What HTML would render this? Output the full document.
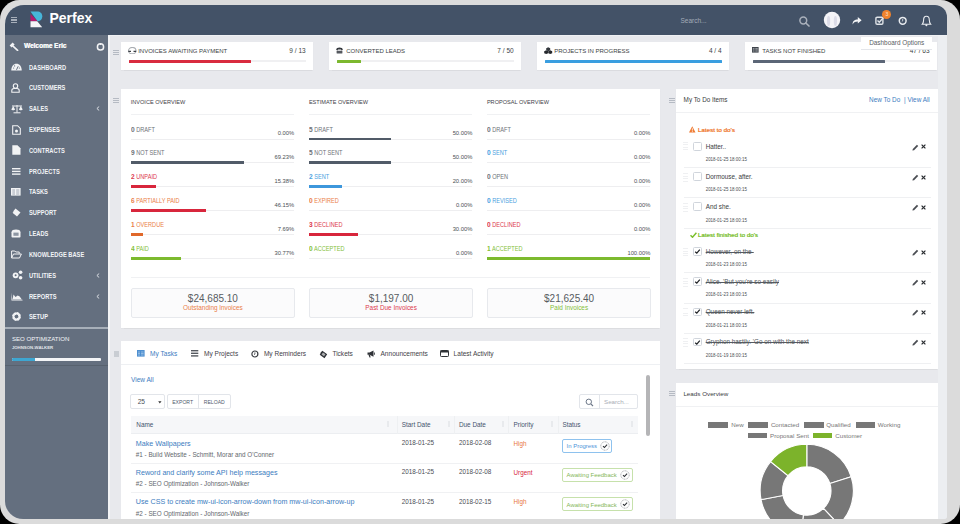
<!DOCTYPE html>
<html><head><meta charset="utf-8">
<style>
*{box-sizing:border-box;margin:0;padding:0}
html,body{width:960px;height:524px;overflow:hidden;background:#000;font-family:"Liberation Sans",sans-serif}
#frame{position:absolute;left:0;top:0;width:960px;height:524px;background:#dbdbdb;border-radius:19.5px;overflow:hidden}
#screen{position:absolute;left:5px;top:5px;width:942px;height:513.5px;background:#e8e9ed;border-radius:19px 12px 3px 18px;overflow:hidden}
#pg{position:absolute;left:-5px;top:-5px;width:960px;height:524px}
.a{position:absolute;white-space:nowrap}
#header{position:absolute;left:0;top:0;width:960px;height:35px;background:#435267}
#sidebar{position:absolute;left:0;top:35px;width:108px;height:489px;background:#646f7f}
.card{position:absolute;background:#fff}
.mi{position:absolute;left:28.8px;font-size:6.8px;font-weight:700;color:#f1f3f6;line-height:8px;height:8px;transform:scaleX(0.84);transform-origin:0 50%;margin-top:0.9px}
.ic{position:absolute}
.handle{position:absolute;width:6px;height:5px;border-top:1px solid #b5bac3;border-bottom:1px solid #b5bac3}
.handle:after{content:"";position:absolute;left:0;top:1px;width:6px;height:1px;background:#b5bac3}
.ovl{font-size:6.3px;line-height:7px;transform:scaleX(0.89);transform-origin:0 50%;margin-top:-0.3px}
.ovl .dg{font-size:7.4px;font-weight:700}
.ovp{font-size:5.8px;color:#4b4f55;line-height:7px}
.sbox{background:#fbfbfc;border:1px solid #e7e9ed;border-radius:2px}
.samt{font-size:10px;color:#575b61;line-height:12px;text-align:center}
.slab{font-size:6.4px;line-height:8px;text-align:center}
.st{font-size:6px;color:#3c3f44;line-height:8px}

</style></head>
<body>
<div id="frame">
<div id="screen">
<div id="pg">
  <div id="header">
    <!-- hamburger -->
    <div class="a" style="left:11px;top:17px;width:6px;height:1.2px;background:#a7afba"></div>
    <div class="a" style="left:11px;top:19.4px;width:6px;height:1.2px;background:#a7afba"></div>
    <div class="a" style="left:11px;top:21.8px;width:6px;height:1.2px;background:#a7afba"></div>
    <!-- logo -->
    <svg class="a" style="left:30px;top:11px" width="13" height="17" viewBox="0 0 13 17">
      <path d="M0.5 0.5 H7 C10.5 0.5 12.3 2.6 12.3 5.3 C12.3 8 10.6 10 8 10.3 L7.5 10.3 Z" fill="#47b5d9"/>
      <path d="M0.5 3 L7.5 10.3 L0.5 10.3 Z" fill="#b3196e"/>
      <path d="M0.5 10.3 H7.2 L12.2 16.2 H0.5 Z" fill="#f4f4f8"/>
    </svg>
    <div class="a" style="left:49.5px;top:10px;font-size:14px;font-weight:700;color:#fff;line-height:17px">Perfex</div>
    <div class="a" style="left:680.5px;top:16.5px;font-size:6.5px;color:#a3acb9;line-height:8px">Search...</div>
    <!-- search icon -->
    <svg class="a" style="left:798px;top:15px" width="13" height="13" viewBox="0 0 13 13">
      <circle cx="5.3" cy="5.5" r="3.4" fill="none" stroke="#aab1bc" stroke-width="1.5"/>
      <path d="M7.8 8 L11 11" stroke="#aab1bc" stroke-width="1.7" stroke-linecap="round"/>
    </svg>
    <!-- avatar -->
    <svg class="a" style="left:823px;top:11px" width="18" height="18" viewBox="0 0 18 18"><circle cx="9" cy="9" r="8.2" fill="#f4f4f8"/><ellipse cx="5.6" cy="10" rx="1.6" ry="5" fill="#dcdce8"/><ellipse cx="12.4" cy="10" rx="1.6" ry="5" fill="#dcdce8"/></svg>
    <!-- share -->
    <svg class="a" style="left:852px;top:16px" width="10" height="9" viewBox="0 0 10 9">
      <path d="M0.6 8.5 C0.6 5 2.5 3.6 5.8 3.6 V1 L9.6 4.3 L5.8 7.6 V5.4 C3.5 5.4 1.8 6 0.6 8.5 Z" fill="#f4f5f7"/>
    </svg>
    <!-- checkbox icon -->
    <svg class="a" style="left:875px;top:16px" width="10" height="10" viewBox="0 0 10 10">
      <rect x="0.9" y="1.2" width="7" height="7" rx="1.2" fill="none" stroke="#dfe3e8" stroke-width="1.4"/>
      <path d="M2.5 4.5 L4.3 6.3 L8.5 1.5" fill="none" stroke="#dfe3e8" stroke-width="1.4"/>
    </svg>
    <div class="a" style="left:882.2px;top:10.1px;width:9.2px;height:9.2px;border-radius:50%;background:#f0832c;color:#fde6d2;font-size:5px;line-height:9.2px;text-align:center">3</div>
    <!-- clock -->
    <svg class="a" style="left:897px;top:15px" width="12" height="12" viewBox="0 0 12 12">
      <circle cx="5.7" cy="5.8" r="3.4" fill="none" stroke="#e9ecf0" stroke-width="1.5"/>
      <path d="M5.7 4 V5.9 L4.8 6.7" fill="none" stroke="#e9ecf0" stroke-width="0.8"/>
    </svg>
    <!-- bell -->
    <svg class="a" style="left:921px;top:15px" width="11" height="12" viewBox="0 0 11 12">
      <path d="M5.4 1.2 C3.2 1.2 2.6 3 2.6 5 C2.6 7 2.2 8.2 1.2 9.3 H9.7 C8.7 8.2 8.3 7 8.3 5 C8.3 3 7.6 1.2 5.4 1.2 Z" fill="none" stroke="#e9ecf0" stroke-width="1.1"/>
      <circle cx="5.4" cy="10.3" r="1" fill="#e9ecf0"/>
    </svg>
  </div>
  <div id="sidebar">
    <!-- welcome -->
    <svg class="ic" style="left:9.3px;top:7.3px" width="10" height="9" viewBox="0 0 10 9"><path d="M0.6 3.6 L3.6 0.6 L5.6 2.6 L2.6 5.6 Z" fill="#f2f3f5"/><path d="M4 4.2 L8.6 8.3" stroke="#f2f3f5" stroke-width="1.7" stroke-linecap="round"/></svg>
    <div class="a" style="left:23.9px;top:7px;font-size:6.5px;font-weight:700;color:#f6f7f9;line-height:8px;text-shadow:0.25px 0 0 #f6f7f9">Welcome Eric</div>
    <svg class="ic" style="left:95.5px;top:6.8px" width="9" height="9" viewBox="0 0 9 9"><circle cx="4.5" cy="4.9" r="3.1" fill="none" stroke="#f2f3f5" stroke-width="1.5"/><path d="M4.5 0.9 V3" stroke="#f2f3f5" stroke-width="1.2"/></svg>
<div class="mi" style="top:27.7px">DASHBOARD</div>
<svg class="ic" style="left:11px;top:28.0px" width="11" height="8" viewBox="0 0 11 8"><path d="M0.3 7.5 C0.3 3.5 2.6 0.8 5.5 0.8 C8.4 0.8 10.7 3.5 10.7 7.5 Z" fill="#f2f3f5"/><path d="M5.5 6.8 L7.2 3.3" stroke="#646f7f" stroke-width="1"/><circle cx="2.6" cy="5" r="0.6" fill="#646f7f"/><circle cx="3.6" cy="2.9" r="0.6" fill="#646f7f"/><circle cx="8.4" cy="5" r="0.6" fill="#646f7f"/></svg>
<div class="mi" style="top:48.5px">CUSTOMERS</div>
<svg class="ic" style="left:11px;top:47.8px" width="9" height="10" viewBox="0 0 9 10"><circle cx="4.5" cy="3" r="2.2" fill="none" stroke="#f2f3f5" stroke-width="1.1"/><path d="M0.8 9.3 V7.6 C0.8 6.3 2 5.5 3 5.5 H6 C7 5.5 8.2 6.3 8.2 7.6 V9.3 Z" fill="none" stroke="#f2f3f5" stroke-width="1.1"/></svg>
<div class="mi" style="top:69.3px">SALES</div>
<svg class="ic" style="left:11px;top:68.6px" width="12" height="10" viewBox="0 0 12 10"><path d="M6 1 V8.5 M2.5 8.8 H9.5 M1 2 H11" stroke="#f2f3f5" stroke-width="1"/><path d="M0.3 5.5 L2.2 2 L4.1 5.5 C3.5 6.6 0.9 6.6 0.3 5.5 Z M7.9 5.5 L9.8 2 L11.7 5.5 C11.1 6.6 8.5 6.6 7.9 5.5 Z" fill="#f2f3f5"/></svg>
<svg class="ic" style="left:95.5px;top:71.1px" width="4" height="5" viewBox="0 0 4 5"><path d="M3.2 0.5 L0.9 2.5 L3.2 4.5" fill="none" stroke="#e6e9ed" stroke-width="0.9"/></svg>
<div class="mi" style="top:90.2px">EXPENSES</div>
<svg class="ic" style="left:11.5px;top:89.5px" width="9" height="10" viewBox="0 0 9 10"><path d="M0.7 0.7 H5.6 L8.3 3.4 V9.3 H0.7 Z" fill="none" stroke="#f2f3f5" stroke-width="1.1"/><circle cx="4.5" cy="6" r="1.5" fill="#f2f3f5"/></svg>
<div class="mi" style="top:111.0px">CONTRACTS</div>
<svg class="ic" style="left:11.5px;top:110.3px" width="9" height="10" viewBox="0 0 9 10"><path d="M0.3 0.3 H5.5 L8.5 3.3 V9.7 H0.3 Z" fill="#f2f3f5"/></svg>
<div class="mi" style="top:131.8px">PROJECTS</div>
<svg class="ic" style="left:11.5px;top:132.6px" width="9" height="7" viewBox="0 0 9 7"><rect x="0" y="0" width="8.5" height="1.4" fill="#f2f3f5"/><rect x="0" y="2.7" width="8.5" height="1.4" fill="#f2f3f5"/><rect x="0" y="5.4" width="8.5" height="1.4" fill="#f2f3f5"/></svg>
<div class="mi" style="top:152.6px">TASKS</div>
<svg class="ic" style="left:11.3px;top:152.9px" width="10" height="8" viewBox="0 0 10 8"><rect x="0" y="0" width="9.6" height="7.6" fill="#f2f3f5"/><path d="M1.3 2 H4 M5.2 2 H8.3 M1.3 4 H4 M5.2 4 H8.3 M1.3 6 H4 M5.2 6 H8.3" stroke="#8d96a3" stroke-width="0.8"/></svg>
<div class="mi" style="top:173.4px">SUPPORT</div>
<svg class="ic" style="left:11.5px;top:173.2px" width="9" height="9" viewBox="0 0 9 9"><path d="M3.5 0.5 L8.5 4.5 L5 8.5 L0.5 4.8 C1.3 4.4 1.6 3.8 1.3 3.2 Z" fill="#f2f3f5"/></svg>
<div class="mi" style="top:194.3px">LEADS</div>
<svg class="ic" style="left:11.3px;top:194.1px" width="10" height="9" viewBox="0 0 10 9"><path d="M0.5 3.3 C0.5 1.3 2.5 0.6 5 0.6 C7.5 0.6 9.5 1.3 9.5 3.3 V7.8 C9.5 8.3 9.2 8.5 8.7 8.5 H1.3 C0.8 8.5 0.5 8.3 0.5 7.8 Z" fill="#f2f3f5"/><rect x="2.4" y="3.6" width="5.2" height="3.2" fill="#8d96a3"/></svg>
<div class="mi" style="top:215.1px">KNOWLEDGE BASE</div>
<svg class="ic" style="left:11.3px;top:214.9px" width="11" height="9" viewBox="0 0 11 9"><path d="M0.6 8 V1 H3.8 L4.8 2 H8.2 V3.7 M0.6 8 L2.5 4 H10.4 L8.5 8 Z" fill="none" stroke="#f2f3f5" stroke-width="1"/></svg>
<div class="mi" style="top:235.9px">UTILITIES</div>
<svg class="ic" style="left:11.5px;top:235.2px" width="11" height="10" viewBox="0 0 11 10"><circle cx="3.6" cy="5.3" r="2.9" fill="#f2f3f5"/><circle cx="3.6" cy="5.3" r="1" fill="#646f7f"/><circle cx="8.6" cy="2.2" r="1.8" fill="#f2f3f5"/><circle cx="8.6" cy="7.8" r="1.8" fill="#f2f3f5"/></svg>
<svg class="ic" style="left:95.5px;top:237.7px" width="4" height="5" viewBox="0 0 4 5"><path d="M3.2 0.5 L0.9 2.5 L3.2 4.5" fill="none" stroke="#e6e9ed" stroke-width="0.9"/></svg>
<div class="mi" style="top:256.7px">REPORTS</div>
<svg class="ic" style="left:11px;top:256.5px" width="12" height="9" viewBox="0 0 12 9"><path d="M0.5 0.5 V8.5 H11.5 V7.7 H1.3 Z" fill="#f2f3f5"/><path d="M1.5 7.5 L2.5 2.5 L4.5 5 L6.7 3.5 L8.7 4.5 L10.8 7.5 Z" fill="#f2f3f5"/></svg>
<svg class="ic" style="left:95.5px;top:258.5px" width="4" height="5" viewBox="0 0 4 5"><path d="M3.2 0.5 L0.9 2.5 L3.2 4.5" fill="none" stroke="#e6e9ed" stroke-width="0.9"/></svg>
<div class="mi" style="top:277.5px">SETUP</div>
<svg class="ic" style="left:11.5px;top:277.3px" width="9" height="9" viewBox="0 0 9 9"><circle cx="4.5" cy="4.5" r="3.1" fill="none" stroke="#f2f3f5" stroke-width="2.6" stroke-dasharray="1.6 0.8"/><circle cx="4.5" cy="4.5" r="3.1" fill="none" stroke="#f2f3f5" stroke-width="1.6"/></svg>
    <div class="a" style="left:5px;top:292px;width:103px;height:1.5px;background:#a7afb9"></div>
    <div class="a" style="left:11.9px;top:299.5px;font-size:6.1px;color:#f4f5f7;line-height:8px">SEO OPTIMIZATION</div>
    <div class="a" style="left:11.9px;top:309.8px;font-size:4.3px;font-weight:700;color:#e2e6ea;line-height:5px">JOHNSON-WALKER</div>
    <div class="a" style="left:11.5px;top:322.7px;width:89px;height:3px;background:#f4f5f7;border-radius:1px"></div>
    <div class="a" style="left:11.5px;top:322.7px;width:23.5px;height:3px;background:#3ea6d1;border-radius:1px 0 0 1px"></div>
    <div class="a" style="left:5px;top:329.8px;width:103px;height:1px;background:#58626f"></div>
  </div>
<!--CARDS-->
<div class="card" style="left:121px;top:41.5px;width:192px;height:28.5px;box-shadow:0 0.5px 1px rgba(0,0,0,0.06)"></div>
<div class="handle" style="left:113px;top:50px"></div>
<svg class="a" style="left:128px;top:46.6px" width="9" height="7.5" viewBox="0 0 9 7.5"><ellipse cx="4.25" cy="3.7" rx="3.7" ry="3.2" fill="none" stroke="#a9adb2" stroke-width="1.1"/><path d="M0.3 4.3 H3 M5.5 4.3 H8.2" stroke="#3a3e44" stroke-width="1.3"/></svg>
<div class="a st" style="left:138.2px;top:46.5px">INVOICES AWAITING PAYMENT</div>
<div class="a st" style="right:654.4px;top:46.5px;font-size:6.5px">9 / 13</div>
<div class="a" style="left:128.5px;top:60.4px;width:177.2px;height:1.6px;background:#f0f0f2"></div>
<div class="a" style="left:128.5px;top:59.8px;width:122.6px;height:2.8px;background:#d92b3f;border-radius:0.5px"></div>
<div class="card" style="left:329px;top:41.5px;width:192px;height:28.5px;box-shadow:0 0.5px 1px rgba(0,0,0,0.06)"></div>
<svg class="a" style="left:336.3px;top:46.7px" width="7" height="7" viewBox="0 0 7 7"><path d="M0.2 3 C0.2 1 1.8 0.4 3.5 0.4 C5.2 0.4 6.8 1 6.8 3 L5.5 3.4 L5 2.4 H2 L1.5 3.4 Z" fill="#33373d"/><rect x="0.6" y="3.8" width="5.8" height="2.8" rx="0.6" fill="#55595f"/></svg>
<div class="a st" style="left:346.2px;top:46.5px">CONVERTED LEADS</div>
<div class="a st" style="right:446.4px;top:46.5px;font-size:6.5px">7 / 50</div>
<div class="a" style="left:336.5px;top:60.4px;width:177.2px;height:1.6px;background:#f0f0f2"></div>
<div class="a" style="left:336.5px;top:59.8px;width:24.8px;height:2.8px;background:#7cb82f;border-radius:0.5px"></div>
<div class="card" style="left:537px;top:41.5px;width:192px;height:28.5px;box-shadow:0 0.5px 1px rgba(0,0,0,0.06)"></div>
<svg class="a" style="left:544.3px;top:46.5px" width="8.5" height="7" viewBox="0 0 8.5 7"><path d="M4.2 0.3 L6.2 1.3 V3.3 L4.2 4.3 L2.2 3.3 V1.3 Z" fill="#33373d"/><path d="M2.2 3.3 L4.2 4.3 V6.3 L2.2 7 L0.2 6.3 V4.3 Z M6.2 3.3 L8.2 4.3 V6.3 L6.2 7 L4.4 6.3 V4.3 Z" fill="#26292e"/></svg>
<div class="a st" style="left:554.2px;top:46.5px">PROJECTS IN PROGRESS</div>
<div class="a st" style="right:238.4px;top:46.5px;font-size:6.5px">4 / 4</div>
<div class="a" style="left:544.5px;top:60.4px;width:177.2px;height:1.6px;background:#f0f0f2"></div>
<div class="a" style="left:544.5px;top:59.8px;width:177.2px;height:2.8px;background:#3a9ee0;border-radius:0.5px"></div>
<div class="card" style="left:745px;top:41.5px;width:192px;height:28.5px;box-shadow:0 0.5px 1px rgba(0,0,0,0.06)"></div>
<svg class="a" style="left:752.3px;top:47px" width="7" height="6" viewBox="0 0 7 6"><rect x="0" y="0" width="6.6" height="5.6" fill="#3f444b"/><path d="M0.8 1.5 H2.5 M3.3 1.5 H5.8 M0.8 2.8 H2.5 M3.3 2.8 H5.8 M0.8 4.1 H2.5 M3.3 4.1 H5.8" stroke="#c7cbd0" stroke-width="0.6"/></svg>
<div class="a st" style="left:762.2px;top:46.5px">TASKS NOT FINISHED</div>
<div class="a st" style="right:30.4px;top:46.5px;font-size:6.5px">47 / 63</div>
<div class="a" style="left:752.5px;top:60.4px;width:177.2px;height:1.6px;background:#f0f0f2"></div>
<div class="a" style="left:752.5px;top:59.8px;width:132.2px;height:2.8px;background:#5b6677;border-radius:0.5px"></div>
<!--/CARDS-->
<!--OVERVIEW-->
<div class="card" style="left:120.5px;top:88.8px;width:539.5px;height:239.2px;box-shadow:0 0.5px 1px rgba(0,0,0,0.05)"></div>
<div class="handle" style="left:113.3px;top:97.5px"></div>
<div class="a" style="left:130.7px;top:98px;font-size:5.6px;color:#3f4247;line-height:8px">INVOICE OVERVIEW</div>
<div class="a" style="left:130.7px;top:114px;width:163.4px;height:1px;background:#f0f1f3"></div>
<div class="a ovl" style="left:130.7px;top:125.80px;color:#6e7278"><span class="dg">0</span> DRAFT</div>
<div class="a ovp" style="right:665.90px;top:130.40px">0.00%</div>
<div class="a" style="left:130.7px;top:138.50px;width:163.4px;height:1px;background:#eeeef0"></div>
<div class="a ovl" style="left:130.7px;top:149.68px;color:#6e7278"><span class="dg">9</span> NOT SENT</div>
<div class="a ovp" style="right:665.90px;top:154.28px">69.23%</div>
<div class="a" style="left:130.7px;top:162.38px;width:163.4px;height:1px;background:#eeeef0"></div>
<div class="a" style="left:130.7px;top:161.48px;width:113.12px;height:2.8px;background:#515b68"></div>
<div class="a ovl" style="left:130.7px;top:173.56px;color:#dc3a4e"><span class="dg">2</span> UNPAID</div>
<div class="a ovp" style="right:665.90px;top:178.16px">15.38%</div>
<div class="a" style="left:130.7px;top:186.26px;width:163.4px;height:1px;background:#eeeef0"></div>
<div class="a" style="left:130.7px;top:185.36px;width:25.13px;height:2.8px;background:#d8263c"></div>
<div class="a ovl" style="left:130.7px;top:197.44px;color:#ea8049"><span class="dg">6</span> PARTIALLY PAID</div>
<div class="a ovp" style="right:665.90px;top:202.04px">46.15%</div>
<div class="a" style="left:130.7px;top:210.14px;width:163.4px;height:1px;background:#eeeef0"></div>
<div class="a" style="left:130.7px;top:209.24px;width:75.41px;height:2.8px;background:#d8263c"></div>
<div class="a ovl" style="left:130.7px;top:221.32px;color:#ea8049"><span class="dg">1</span> OVERDUE</div>
<div class="a ovp" style="right:665.90px;top:225.92px">7.69%</div>
<div class="a" style="left:130.7px;top:234.02px;width:163.4px;height:1px;background:#eeeef0"></div>
<div class="a" style="left:130.7px;top:233.12px;width:12.57px;height:2.8px;background:#e0682a"></div>
<div class="a ovl" style="left:130.7px;top:245.20px;color:#84bf3a"><span class="dg">4</span> PAID</div>
<div class="a ovp" style="right:665.90px;top:249.80px">30.77%</div>
<div class="a" style="left:130.7px;top:257.90px;width:163.4px;height:1px;background:#eeeef0"></div>
<div class="a" style="left:130.7px;top:257.00px;width:50.28px;height:2.8px;background:#7cba2e"></div>
<div class="a sbox" style="left:131.2px;top:287.7px;width:163.4px;height:30.6px"></div>
<div class="a samt" style="left:162.9px;top:292.5px;width:100px">$24,685.10</div>
<div class="a slab" style="left:162.9px;top:303.6px;width:100px;color:#ea8049">Outstanding Invoices</div>
<div class="a" style="left:308.9px;top:98px;font-size:5.6px;color:#3f4247;line-height:8px">ESTIMATE OVERVIEW</div>
<div class="a" style="left:308.9px;top:114px;width:163.4px;height:1px;background:#f0f1f3"></div>
<div class="a ovl" style="left:308.9px;top:125.80px;color:#6e7278"><span class="dg">5</span> DRAFT</div>
<div class="a ovp" style="right:487.70px;top:130.40px">50.00%</div>
<div class="a" style="left:308.9px;top:138.50px;width:163.4px;height:1px;background:#eeeef0"></div>
<div class="a" style="left:308.9px;top:137.60px;width:81.70px;height:2.8px;background:#515b68"></div>
<div class="a ovl" style="left:308.9px;top:149.68px;color:#6e7278"><span class="dg">5</span> NOT SENT</div>
<div class="a ovp" style="right:487.70px;top:154.28px">50.00%</div>
<div class="a" style="left:308.9px;top:162.38px;width:163.4px;height:1px;background:#eeeef0"></div>
<div class="a" style="left:308.9px;top:161.48px;width:81.70px;height:2.8px;background:#515b68"></div>
<div class="a ovl" style="left:308.9px;top:173.56px;color:#4a9fe0"><span class="dg">2</span> SENT</div>
<div class="a ovp" style="right:487.70px;top:178.16px">20.00%</div>
<div class="a" style="left:308.9px;top:186.26px;width:163.4px;height:1px;background:#eeeef0"></div>
<div class="a" style="left:308.9px;top:185.36px;width:32.68px;height:2.8px;background:#3d97dc"></div>
<div class="a ovl" style="left:308.9px;top:197.44px;color:#ea8049"><span class="dg">0</span> EXPIRED</div>
<div class="a ovp" style="right:487.70px;top:202.04px">0.00%</div>
<div class="a" style="left:308.9px;top:210.14px;width:163.4px;height:1px;background:#eeeef0"></div>
<div class="a ovl" style="left:308.9px;top:221.32px;color:#dc3a4e"><span class="dg">3</span> DECLINED</div>
<div class="a ovp" style="right:487.70px;top:225.92px">30.00%</div>
<div class="a" style="left:308.9px;top:234.02px;width:163.4px;height:1px;background:#eeeef0"></div>
<div class="a" style="left:308.9px;top:233.12px;width:49.02px;height:2.8px;background:#d8263c"></div>
<div class="a ovl" style="left:308.9px;top:245.20px;color:#84bf3a"><span class="dg">0</span> ACCEPTED</div>
<div class="a ovp" style="right:487.70px;top:249.80px">0.00%</div>
<div class="a" style="left:308.9px;top:257.90px;width:163.4px;height:1px;background:#eeeef0"></div>
<div class="a sbox" style="left:309.4px;top:287.7px;width:163.4px;height:30.6px"></div>
<div class="a samt" style="left:341.1px;top:292.5px;width:100px">$1,197.00</div>
<div class="a slab" style="left:341.1px;top:303.6px;width:100px;color:#dc3a4e">Past Due Invoices</div>
<div class="a" style="left:486.9px;top:98px;font-size:5.6px;color:#3f4247;line-height:8px">PROPOSAL OVERVIEW</div>
<div class="a" style="left:486.9px;top:114px;width:163.4px;height:1px;background:#f0f1f3"></div>
<div class="a ovl" style="left:486.9px;top:125.80px;color:#6e7278"><span class="dg">0</span> DRAFT</div>
<div class="a ovp" style="right:309.70px;top:130.40px">0.00%</div>
<div class="a" style="left:486.9px;top:138.50px;width:163.4px;height:1px;background:#eeeef0"></div>
<div class="a ovl" style="left:486.9px;top:149.68px;color:#4a9fe0"><span class="dg">0</span> SENT</div>
<div class="a ovp" style="right:309.70px;top:154.28px">0.00%</div>
<div class="a" style="left:486.9px;top:162.38px;width:163.4px;height:1px;background:#eeeef0"></div>
<div class="a ovl" style="left:486.9px;top:173.56px;color:#6e7278"><span class="dg">0</span> OPEN</div>
<div class="a ovp" style="right:309.70px;top:178.16px">0.00%</div>
<div class="a" style="left:486.9px;top:186.26px;width:163.4px;height:1px;background:#eeeef0"></div>
<div class="a ovl" style="left:486.9px;top:197.44px;color:#4a9fe0"><span class="dg">0</span> REVISED</div>
<div class="a ovp" style="right:309.70px;top:202.04px">0.00%</div>
<div class="a" style="left:486.9px;top:210.14px;width:163.4px;height:1px;background:#eeeef0"></div>
<div class="a ovl" style="left:486.9px;top:221.32px;color:#dc3a4e"><span class="dg">0</span> DECLINED</div>
<div class="a ovp" style="right:309.70px;top:225.92px">0.00%</div>
<div class="a" style="left:486.9px;top:234.02px;width:163.4px;height:1px;background:#eeeef0"></div>
<div class="a ovl" style="left:486.9px;top:245.20px;color:#84bf3a"><span class="dg">1</span> ACCEPTED</div>
<div class="a ovp" style="right:309.70px;top:249.80px">100.00%</div>
<div class="a" style="left:486.9px;top:257.90px;width:163.4px;height:1px;background:#eeeef0"></div>
<div class="a" style="left:486.9px;top:257.00px;width:163.40px;height:2.8px;background:#7cba2e"></div>
<div class="a sbox" style="left:487.4px;top:287.7px;width:163.4px;height:30.6px"></div>
<div class="a samt" style="left:519.1px;top:292.5px;width:100px">$21,625.40</div>
<div class="a slab" style="left:519.1px;top:303.6px;width:100px;color:#84bf3a">Paid Invoices</div>
<div class="a" style="left:130.8px;top:277px;width:519.5px;height:1px;background:#f0f1f3"></div>
<!--/OVERVIEW-->
<!--TABS-->
<div class="card" style="left:120.5px;top:340.8px;width:539.5px;height:190px"></div>
<div class="a" style="left:113.6px;top:351px;width:5.4px;height:5.8px;background:#c9cdd3"></div>
<svg class="a" style="left:137.4px;top:350.2px" width="8" height="7" viewBox="0 0 8 7"><rect width="7.6" height="6.6" fill="#4d8fd0"/><path d="M1 2 H3 M4 2 H6.6 M1 3.5 H3 M4 3.5 H6.6 M1 5 H3 M4 5 H6.6" stroke="#bcd6f0" stroke-width="0.6"/></svg>
<div class="a" style="left:150.1px;top:349px;font-size:6.55px;line-height:9px;color:#3b7cc0">My Tasks</div>
<svg class="a" style="left:190.9px;top:350.2px" width="8" height="7" viewBox="0 0 8 7"><rect y="0" width="7.3" height="1.4" fill="#55595f"/><rect y="2.6" width="7.3" height="1.4" fill="#55595f"/><rect y="5.2" width="7.3" height="1.4" fill="#55595f"/></svg>
<div class="a" style="left:204.0px;top:349px;font-size:6.55px;line-height:9px;color:#3f4248">My Projects</div>
<svg class="a" style="left:251.4px;top:349.6px" width="8" height="8" viewBox="0 0 8 8"><circle cx="3.9" cy="4" r="3" fill="none" stroke="#3a3d42" stroke-width="1.2"/><path d="M3.9 2.4 V4.1 L3 4.8" fill="none" stroke="#3a3d42" stroke-width="0.8"/></svg>
<div class="a" style="left:263.9px;top:349px;font-size:6.55px;line-height:9px;color:#3f4248">My Reminders</div>
<svg class="a" style="left:319.3px;top:349.5px" width="9" height="9" viewBox="0 0 9 9"><path d="M3.3 0.8 L8.2 4.3 L5.5 8.2 L0.7 4.7 C1.4 4.3 1.6 3.6 1.3 3.1 Z" fill="#2f3237"/><path d="M4 2.5 L6.5 4.3 L5 6.3 L2.5 4.5 Z" fill="#fff" opacity="0.6"/></svg>
<div class="a" style="left:332.4px;top:349px;font-size:6.55px;line-height:9px;color:#3f4248">Tickets</div>
<svg class="a" style="left:366.8px;top:350px" width="9" height="8" viewBox="0 0 9 8"><path d="M0.5 2.5 H2.5 L6.5 0.5 V6.8 L2.5 4.8 H0.5 Z" fill="#2f3237"/><path d="M1.5 4.8 L2.5 7.5 H3.6 L3 4.8" fill="#2f3237"/><path d="M7.5 2.5 V4.8" stroke="#2f3237" stroke-width="0.8"/></svg>
<div class="a" style="left:380.5px;top:349px;font-size:6.55px;line-height:9px;color:#3f4248">Announcements</div>
<svg class="a" style="left:440.2px;top:350px" width="9" height="7" viewBox="0 0 9 7"><rect x="0.5" y="0.5" width="8" height="6" rx="0.8" fill="none" stroke="#2f3237" stroke-width="1"/><rect x="0.5" y="0.5" width="8" height="2" fill="#2f3237"/></svg>
<div class="a" style="left:453.6px;top:349px;font-size:6.55px;line-height:9px;color:#3f4248">Latest Activity</div>
<div class="a" style="left:120.5px;top:364.2px;width:539.5px;height:1px;background:#eef0f3"></div>
<div class="a" style="left:131px;top:375.5px;font-size:6.5px;line-height:8px;color:#3b7cc0">View All</div>
<div class="a" style="left:130.4px;top:393.7px;width:34.3px;height:15.6px;border:1px solid #e2e5ea;border-radius:2px;background:#fff"></div>
<div class="a" style="left:137.7px;top:398px;font-size:6.6px;line-height:8px;color:#4a4e55">25</div>
<svg class="a" style="left:158px;top:400.5px" width="4" height="3" viewBox="0 0 4 3"><path d="M0.2 0.3 H3.5 L1.85 2.6 Z" fill="#333"/></svg>
<div class="a" style="left:166.9px;top:393.7px;width:63.9px;height:15.6px;border:1px solid #e2e5ea;border-radius:2px;background:#fff"></div>
<div class="a" style="left:198.2px;top:393.7px;width:1px;height:15.6px;background:#e2e5ea"></div>
<div class="a" style="left:172.2px;top:398px;font-size:5.1px;line-height:8px;color:#4f5a6e">EXPORT</div>
<div class="a" style="left:203.8px;top:398px;font-size:5.1px;line-height:8px;color:#4f5a6e">RELOAD</div>
<div class="a" style="left:579.4px;top:393.8px;width:58.8px;height:15.7px;border:1px solid #e2e5ea;border-radius:2px;background:#fff"></div>
<div class="a" style="left:598.8px;top:393.8px;width:1px;height:15.7px;background:#e2e5ea"></div>
<svg class="a" style="left:585px;top:397.5px" width="9" height="9" viewBox="0 0 9 9"><circle cx="3.8" cy="3.8" r="2.7" fill="none" stroke="#6b7687" stroke-width="1"/><path d="M5.8 5.8 L8 8" stroke="#6b7687" stroke-width="1.1"/></svg>
<div class="a" style="left:604px;top:397.7px;font-size:6.2px;line-height:8px;color:#a9aeb6">Search...</div>
<div class="a" style="left:646.4px;top:375px;width:3.7px;height:60.6px;background:#b5b5b7;border-radius:2px"></div>
<div class="a" style="left:130.8px;top:415.9px;width:507.1px;height:17.8px;background:#f6f7f9;border-bottom:1px solid #eceef1"></div>
<div class="a" style="left:136.3px;top:420.8px;font-size:6.4px;line-height:8px;color:#45546d">Name</div>
<div class="a" style="left:401.7px;top:420.8px;font-size:6.4px;line-height:8px;color:#45546d">Start Date</div>
<div class="a" style="left:458.9px;top:420.8px;font-size:6.4px;line-height:8px;color:#45546d">Due Date</div>
<div class="a" style="left:513.5px;top:420.8px;font-size:6.4px;line-height:8px;color:#45546d">Priority</div>
<div class="a" style="left:562.4px;top:420.8px;font-size:6.4px;line-height:8px;color:#45546d">Status</div>
<div class="a" style="left:387.4px;top:420.5px;width:1.6px;height:6px;border-left:0.6px solid #e8eaed;border-right:0.6px solid #e8eaed"></div>
<div class="a" style="left:447.7px;top:420.5px;width:1.6px;height:6px;border-left:0.6px solid #e8eaed;border-right:0.6px solid #e8eaed"></div>
<div class="a" style="left:501.7px;top:420.5px;width:1.6px;height:6px;border-left:0.6px solid #e8eaed;border-right:0.6px solid #e8eaed"></div>
<div class="a" style="left:550.6px;top:420.5px;width:1.6px;height:6px;border-left:0.6px solid #e8eaed;border-right:0.6px solid #e8eaed"></div>
<div class="a" style="left:630.5px;top:420.5px;width:1.6px;height:6px;border-left:0.6px solid #e8eaed;border-right:0.6px solid #e8eaed"></div>
<div class="a" style="left:396.5px;top:416px;width:0.6px;height:17.7px;background:#eef0f2"></div>
<div class="a" style="left:453.5px;top:416px;width:0.6px;height:17.7px;background:#eef0f2"></div>
<div class="a" style="left:508.2px;top:416px;width:0.6px;height:17.7px;background:#eef0f2"></div>
<div class="a" style="left:557.6px;top:416px;width:0.6px;height:17.7px;background:#eef0f2"></div>
<div class="a" style="left:135.8px;top:438.6px;font-size:7.15px;line-height:10px;color:#3b7cc0">Make Wallpapers</div>
<div class="a" style="left:135.8px;top:451.2px;font-size:6.3px;line-height:8px;color:#63676d">#1 - Build Website - Schmitt, Morar and O'Conner</div>
<div class="a" style="left:401.7px;top:439.2px;font-size:6.35px;line-height:8px;color:#4a4e55">2018-01-25</div>
<div class="a" style="left:458.9px;top:439.2px;font-size:6.35px;line-height:8px;color:#4a4e55">2018-02-08</div>
<div class="a" style="left:513.5px;top:439.6px;font-size:6.3px;line-height:8px;color:#e8773d">High</div>
<div class="a" style="left:562.1px;top:438.9px;width:50.4px;height:14.1px;border:1px solid #8ec2ee;border-radius:2px"></div>
<div class="a" style="left:566.6px;top:442.2px;font-size:5.95px;line-height:8px;color:#4d94d8">In Progress</div>
<svg class="a" style="left:599.7px;top:441.0px" width="10" height="10" viewBox="0 0 10 10"><circle cx="5" cy="5" r="4.2" fill="#fff" stroke="#8a8d92" stroke-width="0.7" stroke-dasharray="1 0.6"/><path d="M3 5.2 L4.4 6.5 L7.1 3.6" fill="none" stroke="#2f3237" stroke-width="1.1"/></svg>
<div class="a" style="left:130.8px;top:463.2px;width:507.1px;height:1px;background:#f0f1f3"></div>
<div class="a" style="left:135.8px;top:467.8px;font-size:7.15px;line-height:10px;color:#3b7cc0">Reword and clarify some API help messages</div>
<div class="a" style="left:135.8px;top:480.4px;font-size:6.3px;line-height:8px;color:#63676d">#2 - SEO Optimization - Johnson-Walker</div>
<div class="a" style="left:401.7px;top:468.4px;font-size:6.35px;line-height:8px;color:#4a4e55">2018-01-25</div>
<div class="a" style="left:458.9px;top:468.4px;font-size:6.35px;line-height:8px;color:#4a4e55">2018-02-08</div>
<div class="a" style="left:513.5px;top:468.8px;font-size:6.3px;line-height:8px;color:#d8263c">Urgent</div>
<div class="a" style="left:562.1px;top:468.1px;width:70.7px;height:14.1px;border:1px solid #c6e1ab;border-radius:2px"></div>
<div class="a" style="left:566.6px;top:471.4px;font-size:5.95px;line-height:8px;color:#84b657">Awaiting Feedback</div>
<svg class="a" style="left:620.0px;top:470.2px" width="10" height="10" viewBox="0 0 10 10"><circle cx="5" cy="5" r="4.2" fill="#fff" stroke="#8a8d92" stroke-width="0.7" stroke-dasharray="1 0.6"/><path d="M3 5.2 L4.4 6.5 L7.1 3.6" fill="none" stroke="#2f3237" stroke-width="1.1"/></svg>
<div class="a" style="left:130.8px;top:492.4px;width:507.1px;height:1px;background:#f0f1f3"></div>
<div class="a" style="left:135.8px;top:497.0px;font-size:7.15px;line-height:10px;color:#3b7cc0">Use CSS to create mw-ui-icon-arrow-down from mw-ui-icon-arrow-up</div>
<div class="a" style="left:135.8px;top:509.6px;font-size:6.3px;line-height:8px;color:#63676d">#2 - SEO Optimization - Johnson-Walker</div>
<div class="a" style="left:401.7px;top:497.6px;font-size:6.35px;line-height:8px;color:#4a4e55">2018-01-25</div>
<div class="a" style="left:458.9px;top:497.6px;font-size:6.35px;line-height:8px;color:#4a4e55">2018-02-15</div>
<div class="a" style="left:513.5px;top:498.0px;font-size:6.3px;line-height:8px;color:#e8773d">High</div>
<div class="a" style="left:562.1px;top:497.3px;width:70.7px;height:14.1px;border:1px solid #c6e1ab;border-radius:2px"></div>
<div class="a" style="left:566.6px;top:500.6px;font-size:5.95px;line-height:8px;color:#84b657">Awaiting Feedback</div>
<svg class="a" style="left:620.0px;top:499.4px" width="10" height="10" viewBox="0 0 10 10"><circle cx="5" cy="5" r="4.2" fill="#fff" stroke="#8a8d92" stroke-width="0.7" stroke-dasharray="1 0.6"/><path d="M3 5.2 L4.4 6.5 L7.1 3.6" fill="none" stroke="#2f3237" stroke-width="1.1"/></svg>
<div class="a" style="left:130.8px;top:521.6px;width:507.1px;height:1px;background:#f0f1f3"></div>
<!--/TABS-->
<!--RIGHT-->
<div class="card" style="left:675.8px;top:88.7px;width:262.2px;height:279.9px;box-shadow:0 0.5px 1px rgba(0,0,0,0.05)"></div>
<div class="handle" style="left:668.6px;top:97.6px"></div>
<div class="a" style="left:683.6px;top:96px;font-size:6.35px;line-height:8px;color:#3a3d42">My To Do Items</div>
<div class="a" style="left:869.1px;top:96px;font-size:6.4px;line-height:8px;color:#3b7cc0">New To Do</div>
<div class="a" style="left:904.1px;top:96px;font-size:6.4px;line-height:8px;color:#3b7cc0">| View All</div>
<div class="a" style="left:675.8px;top:112px;width:262.2px;height:1px;background:#f0f1f3"></div>
<svg class="a" style="left:689.2px;top:126px" width="7" height="7" viewBox="0 0 7 7"><path d="M3.25 0.2 L6.5 6.5 H0 Z" fill="#ef7b32"/><rect x="2.9" y="2.3" width="0.8" height="2.3" fill="#fff"/><rect x="2.9" y="5.1" width="0.8" height="0.8" fill="#fff"/></svg>
<div class="a" style="left:697.8px;top:125.7px;font-size:6.25px;line-height:8px;color:#ef7b32;text-shadow:0.3px 0 0 #ef7b32">Latest to do's</div>
<svg class="a" style="left:689.6px;top:232px" width="7" height="6" viewBox="0 0 7 6"><path d="M0.5 3.2 L2.5 5.2 L6.4 0.8" fill="none" stroke="#7cbf2f" stroke-width="1.5"/></svg>
<div class="a" style="left:697.7px;top:231.3px;font-size:6.25px;line-height:8px;color:#7cbf2f;text-shadow:0.3px 0 0 #7cbf2f">Latest finished to do's</div>
<div class="a" style="left:683.4px;top:142.4px;width:5px;height:9px;background:repeating-linear-gradient(180deg,#eff0f2 0 1px,transparent 1px 2.5px)"></div>
<div class="a" style="left:693.4px;top:142.0px;width:8.4px;height:8.8px;border:0.8px solid #d0d5dc;border-radius:1.5px;background:#fff"></div>
<div class="a" style="left:705.7px;top:142.6px;font-size:6.35px;line-height:8px;color:#3a3d42;">Hatter..</div>
<div class="a" style="left:705.7px;top:157.1px;font-size:4.45px;line-height:6px;color:#4a4d52">2018-01-25 18:00:15</div>
<svg class="a" style="left:912px;top:143.6px" width="7" height="7" viewBox="0 0 7 7"><path d="M0.4 6.6 L0.8 4.9 L4.9 0.8 L6.2 2.1 L2.1 6.2 Z" fill="#4a4d52"/></svg>
<svg class="a" style="left:920.6px;top:144.4px" width="5" height="5" viewBox="0 0 5 5"><path d="M0.6 0.6 L4.4 4.4 M4.4 0.6 L0.6 4.4" stroke="#2a2d31" stroke-width="1.2"/></svg>
<div class="a" style="left:683.5px;top:167.2px;width:247px;height:1px;background:#eff0f2"></div>
<div class="a" style="left:683.4px;top:172.6px;width:5px;height:9px;background:repeating-linear-gradient(180deg,#eff0f2 0 1px,transparent 1px 2.5px)"></div>
<div class="a" style="left:693.4px;top:172.2px;width:8.4px;height:8.8px;border:0.8px solid #d0d5dc;border-radius:1.5px;background:#fff"></div>
<div class="a" style="left:705.7px;top:172.8px;font-size:6.35px;line-height:8px;color:#3a3d42;">Dormouse, after.</div>
<div class="a" style="left:705.7px;top:187.3px;font-size:4.45px;line-height:6px;color:#4a4d52">2018-01-25 18:00:15</div>
<svg class="a" style="left:912px;top:173.8px" width="7" height="7" viewBox="0 0 7 7"><path d="M0.4 6.6 L0.8 4.9 L4.9 0.8 L6.2 2.1 L2.1 6.2 Z" fill="#4a4d52"/></svg>
<svg class="a" style="left:920.6px;top:174.6px" width="5" height="5" viewBox="0 0 5 5"><path d="M0.6 0.6 L4.4 4.4 M4.4 0.6 L0.6 4.4" stroke="#2a2d31" stroke-width="1.2"/></svg>
<div class="a" style="left:683.5px;top:197.4px;width:247px;height:1px;background:#eff0f2"></div>
<div class="a" style="left:683.4px;top:202.8px;width:5px;height:9px;background:repeating-linear-gradient(180deg,#eff0f2 0 1px,transparent 1px 2.5px)"></div>
<div class="a" style="left:693.4px;top:202.4px;width:8.4px;height:8.8px;border:0.8px solid #d0d5dc;border-radius:1.5px;background:#fff"></div>
<div class="a" style="left:705.7px;top:203.0px;font-size:6.35px;line-height:8px;color:#3a3d42;">And she.</div>
<div class="a" style="left:705.7px;top:217.5px;font-size:4.45px;line-height:6px;color:#4a4d52">2018-01-25 18:00:15</div>
<svg class="a" style="left:912px;top:204.0px" width="7" height="7" viewBox="0 0 7 7"><path d="M0.4 6.6 L0.8 4.9 L4.9 0.8 L6.2 2.1 L2.1 6.2 Z" fill="#4a4d52"/></svg>
<svg class="a" style="left:920.6px;top:204.8px" width="5" height="5" viewBox="0 0 5 5"><path d="M0.6 0.6 L4.4 4.4 M4.4 0.6 L0.6 4.4" stroke="#2a2d31" stroke-width="1.2"/></svg>
<div class="a" style="left:683.5px;top:227.6px;width:247px;height:1px;background:#eff0f2"></div>
<div class="a" style="left:683.4px;top:247.5px;width:5px;height:9px;background:repeating-linear-gradient(180deg,#eff0f2 0 1px,transparent 1px 2.5px)"></div>
<div class="a" style="left:693.4px;top:247.1px;width:8.4px;height:8.8px;border:0.8px solid #d0d5dc;border-radius:1.5px;background:#fff"></div>
<svg class="a" style="left:694.2px;top:248.0px" width="7" height="7" viewBox="0 0 7 7"><path d="M1.2 3.7 L2.8 5.2 L5.8 1.6" fill="none" stroke="#1f2226" stroke-width="1.2"/></svg>
<div class="a" style="left:705.7px;top:247.7px;font-size:6.35px;line-height:8px;color:#555a60;text-decoration:line-through;">However, on the-</div>
<div class="a" style="left:705.7px;top:262.2px;font-size:4.45px;line-height:6px;color:#4a4d52">2018-01-23 18:00:15</div>
<svg class="a" style="left:912px;top:248.7px" width="7" height="7" viewBox="0 0 7 7"><path d="M0.4 6.6 L0.8 4.9 L4.9 0.8 L6.2 2.1 L2.1 6.2 Z" fill="#4a4d52"/></svg>
<svg class="a" style="left:920.6px;top:249.5px" width="5" height="5" viewBox="0 0 5 5"><path d="M0.6 0.6 L4.4 4.4 M4.4 0.6 L0.6 4.4" stroke="#2a2d31" stroke-width="1.2"/></svg>
<div class="a" style="left:683.5px;top:272.3px;width:247px;height:1px;background:#eff0f2"></div>
<div class="a" style="left:683.4px;top:277.7px;width:5px;height:9px;background:repeating-linear-gradient(180deg,#eff0f2 0 1px,transparent 1px 2.5px)"></div>
<div class="a" style="left:693.4px;top:277.3px;width:8.4px;height:8.8px;border:0.8px solid #d0d5dc;border-radius:1.5px;background:#fff"></div>
<svg class="a" style="left:694.2px;top:278.2px" width="7" height="7" viewBox="0 0 7 7"><path d="M1.2 3.7 L2.8 5.2 L5.8 1.6" fill="none" stroke="#1f2226" stroke-width="1.2"/></svg>
<div class="a" style="left:705.7px;top:277.9px;font-size:6.35px;line-height:8px;color:#555a60;text-decoration:line-through;">Alice. 'But you're so easily</div>
<div class="a" style="left:705.7px;top:292.4px;font-size:4.45px;line-height:6px;color:#4a4d52">2018-01-23 18:00:15</div>
<svg class="a" style="left:912px;top:278.9px" width="7" height="7" viewBox="0 0 7 7"><path d="M0.4 6.6 L0.8 4.9 L4.9 0.8 L6.2 2.1 L2.1 6.2 Z" fill="#4a4d52"/></svg>
<svg class="a" style="left:920.6px;top:279.7px" width="5" height="5" viewBox="0 0 5 5"><path d="M0.6 0.6 L4.4 4.4 M4.4 0.6 L0.6 4.4" stroke="#2a2d31" stroke-width="1.2"/></svg>
<div class="a" style="left:683.5px;top:302.5px;width:247px;height:1px;background:#eff0f2"></div>
<div class="a" style="left:683.4px;top:307.9px;width:5px;height:9px;background:repeating-linear-gradient(180deg,#eff0f2 0 1px,transparent 1px 2.5px)"></div>
<div class="a" style="left:693.4px;top:307.5px;width:8.4px;height:8.8px;border:0.8px solid #d0d5dc;border-radius:1.5px;background:#fff"></div>
<svg class="a" style="left:694.2px;top:308.4px" width="7" height="7" viewBox="0 0 7 7"><path d="M1.2 3.7 L2.8 5.2 L5.8 1.6" fill="none" stroke="#1f2226" stroke-width="1.2"/></svg>
<div class="a" style="left:705.7px;top:308.1px;font-size:6.35px;line-height:8px;color:#555a60;text-decoration:line-through;">Queen never left.</div>
<div class="a" style="left:705.7px;top:322.6px;font-size:4.45px;line-height:6px;color:#4a4d52">2018-01-21 18:00:15</div>
<svg class="a" style="left:912px;top:309.1px" width="7" height="7" viewBox="0 0 7 7"><path d="M0.4 6.6 L0.8 4.9 L4.9 0.8 L6.2 2.1 L2.1 6.2 Z" fill="#4a4d52"/></svg>
<svg class="a" style="left:920.6px;top:309.9px" width="5" height="5" viewBox="0 0 5 5"><path d="M0.6 0.6 L4.4 4.4 M4.4 0.6 L0.6 4.4" stroke="#2a2d31" stroke-width="1.2"/></svg>
<div class="a" style="left:683.5px;top:332.7px;width:247px;height:1px;background:#eff0f2"></div>
<div class="a" style="left:683.4px;top:338.1px;width:5px;height:9px;background:repeating-linear-gradient(180deg,#eff0f2 0 1px,transparent 1px 2.5px)"></div>
<div class="a" style="left:693.4px;top:337.7px;width:8.4px;height:8.8px;border:0.8px solid #d0d5dc;border-radius:1.5px;background:#fff"></div>
<svg class="a" style="left:694.2px;top:338.6px" width="7" height="7" viewBox="0 0 7 7"><path d="M1.2 3.7 L2.8 5.2 L5.8 1.6" fill="none" stroke="#1f2226" stroke-width="1.2"/></svg>
<div class="a" style="left:705.7px;top:338.3px;font-size:6.35px;line-height:8px;color:#555a60;text-decoration:line-through;">Gryphon hastily. 'Go on with the next</div>
<div class="a" style="left:705.7px;top:352.8px;font-size:4.45px;line-height:6px;color:#4a4d52">2018-01-19 18:00:15</div>
<svg class="a" style="left:912px;top:339.3px" width="7" height="7" viewBox="0 0 7 7"><path d="M0.4 6.6 L0.8 4.9 L4.9 0.8 L6.2 2.1 L2.1 6.2 Z" fill="#4a4d52"/></svg>
<svg class="a" style="left:920.6px;top:340.1px" width="5" height="5" viewBox="0 0 5 5"><path d="M0.6 0.6 L4.4 4.4 M4.4 0.6 L0.6 4.4" stroke="#2a2d31" stroke-width="1.2"/></svg>
<div class="a" style="left:683.5px;top:362.9px;width:247px;height:1px;background:#eff0f2"></div>
<div class="card" style="left:676px;top:382.5px;width:261.5px;height:150px"></div>
<div class="handle" style="left:668.6px;top:391.4px"></div>
<div class="a" style="left:683.4px;top:390px;font-size:6.25px;line-height:8px;color:#3a3d42">Leads Overview</div>
<div class="a" style="left:676px;top:406.3px;width:261.5px;height:1px;background:#f0f1f3"></div>
<div class="a" style="left:708.4px;top:421.8px;width:19.6px;height:5.8px;background:#777"></div>
<div class="a" style="left:731.25px;top:420.7px;font-size:6.2px;line-height:8px;color:#777">New</div>
<div class="a" style="left:748.4px;top:421.8px;width:19.6px;height:5.8px;background:#777"></div>
<div class="a" style="left:770.9px;top:420.7px;font-size:6.2px;line-height:8px;color:#777">Contacted</div>
<div class="a" style="left:804.0px;top:421.8px;width:19.6px;height:5.8px;background:#777"></div>
<div class="a" style="left:826.25px;top:420.7px;font-size:6.2px;line-height:8px;color:#777">Qualified</div>
<div class="a" style="left:855.6px;top:421.8px;width:19.6px;height:5.8px;background:#777"></div>
<div class="a" style="left:877.8px;top:420.7px;font-size:6.2px;line-height:8px;color:#777">Working</div>
<div class="a" style="left:747.5px;top:432.7px;width:19.6px;height:5.8px;background:#777"></div>
<div class="a" style="left:770.0px;top:431.6px;font-size:6.2px;line-height:8px;color:#777">Proposal Sent</div>
<div class="a" style="left:812.5px;top:432.7px;width:19.6px;height:5.8px;background:#7cb32b"></div>
<div class="a" style="left:835.3px;top:431.6px;font-size:6.2px;line-height:8px;color:#777">Customer</div>
<svg class="a" style="left:0;top:0" width="960" height="524" viewBox="0 0 960 524"><path d="M806.80 444.30 A46.6 46.6 0 0 1 851.19 476.73 L829.85 483.54 A24.2 24.2 0 0 0 806.80 466.70 Z" fill="#777" stroke="#fff" stroke-width="1.1"/><path d="M851.19 476.73 A46.6 46.6 0 0 1 838.88 524.70 L823.46 508.45 A24.2 24.2 0 0 0 829.85 483.54 Z" fill="#777" stroke="#fff" stroke-width="1.1"/><path d="M838.88 524.70 A46.6 46.6 0 0 1 800.31 537.05 L803.43 514.86 A24.2 24.2 0 0 0 823.46 508.45 Z" fill="#777" stroke="#fff" stroke-width="1.1"/><path d="M800.31 537.05 A46.6 46.6 0 0 1 761.03 499.63 L783.03 495.43 A24.2 24.2 0 0 0 803.43 514.86 Z" fill="#777" stroke="#fff" stroke-width="1.1"/><path d="M761.03 499.63 A46.6 46.6 0 0 1 770.58 461.57 L787.99 475.67 A24.2 24.2 0 0 0 783.03 495.43 Z" fill="#777" stroke="#fff" stroke-width="1.1"/><path d="M770.58 461.57 A46.6 46.6 0 0 1 806.80 444.30 L806.80 466.70 A24.2 24.2 0 0 0 787.99 475.67 Z" fill="#7cb32b" stroke="#fff" stroke-width="1.1"/></svg>
<!--/RIGHT-->
<!--TIP-->
<div class="a" style="left:861.2px;top:37.4px;width:70.4px;height:12.3px;background:#fff;border-bottom:1px solid #e4e6ea"></div>
<div class="a" style="left:869.2px;top:38.6px;font-size:6.4px;line-height:8px;color:#5a5e64">Dashboard Options</div>
<!--/TIP-->
<div class="a" style="left:108px;top:35px;width:1.6px;height:489px;background:#f3f4f6"></div>
<div class="a" style="left:938.2px;top:35px;width:9px;height:489px;background:#eceef1"></div>
<div class="a" style="left:108px;top:35px;width:852px;height:1.2px;background:#f0f1f4"></div>

</div>
</div>
</div>
</body></html>
